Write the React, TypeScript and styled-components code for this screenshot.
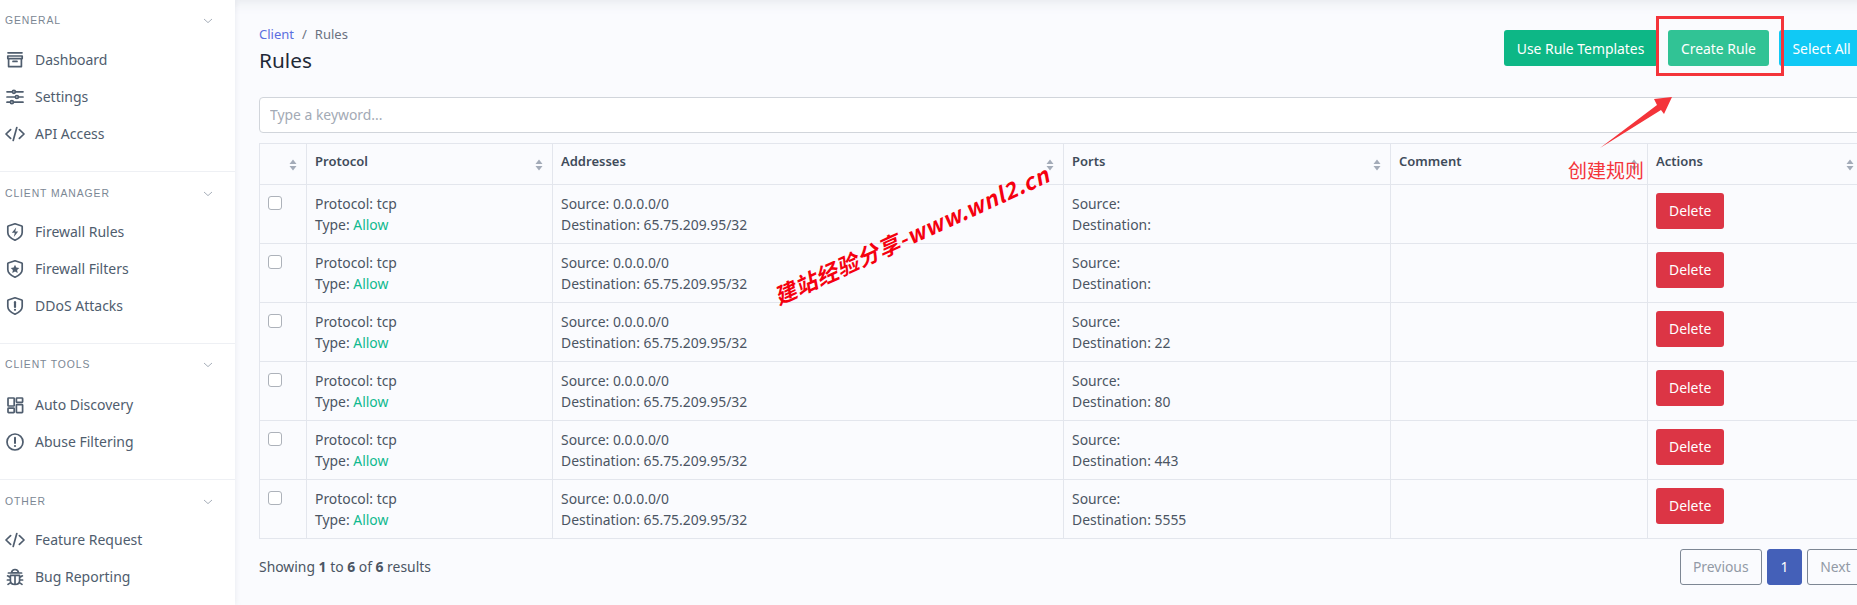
import React from "react";
import styled, { createGlobalStyle } from "styled-components";

const Global = createGlobalStyle`
  html, body { margin: 0; padding: 0; height: 605px; overflow: hidden; background: #fafbfe; }
  body { font-family: "Noto Sans", "Open Sans", sans-serif; font-size: 13.9px; color: #4b5563; }
  * { box-sizing: border-box; }
`;

const Shell = styled.div`
  position: relative;
  display: flex;
  width: 1857px;
  height: 605px;
  overflow: hidden;
  background: #fafbfe;
`;

const Sidebar = styled.aside`
  flex: 0 0 235px;
  background: #fff;
  box-shadow: 0 0 6px rgba(154, 161, 171, 0.2);
  position: relative;
  z-index: 1;
`;

const SectionHead = styled.div`
  height: 41px;
  padding: 0 22px 0 5px;
  display: flex;
  align-items: center;
  justify-content: space-between;
  font-family: "Liberation Sans", Arial, sans-serif;
  font-size: 10.4px;
  letter-spacing: 0.9px;
  color: #7b8794;
`;

const Section = styled.section<{ $h: number }>`
  height: ${(p) => p.$h}px;
  border-bottom: 1px solid #eef0f4;
  & + & ${SectionHead} { padding-top: 2px; }
`;

const ItemList = styled.ul<{ $top: number }>`
  list-style: none;
  margin: 0;
  padding: ${(p) => p.$top}px 0 0;
`;

const Item = styled.li`
  height: 37px;
  display: flex;
  align-items: center;
  gap: 10px;
  padding-left: 5px;
  font-size: 14px;
  color: #4f5d6e;
`;

const IconBox = styled.span`
  width: 20px;
  height: 20px;
  display: flex;
  color: #4f5d6e;
`;

const Main = styled.main`
  flex: 0 0 1628px;
  padding: 0 0 0 24px;
  position: relative;
  &::before {
    content: "";
    position: absolute;
    left: -10px;
    right: -40px;
    top: -10px;
    height: 10px;
    box-shadow: 0 0 14px rgba(154, 161, 171, 0.3);
  }
`;

const PageHead = styled.header`
  height: 97px;
  display: flex;
  justify-content: space-between;
  padding-top: 25px;
`;

const Crumbs = styled.nav`
  height: 18px;
  display: flex;
  align-items: center;
  gap: 8px;
  font-size: 13px;
  color: #6b7280;
`;

const CrumbLink = styled.span`
  color: #5a6ee0;
`;

const Title = styled.h1`
  margin: 2px 0 0;
  font-size: 20.8px;
  font-weight: 400;
  line-height: 30px;
  color: #1f2937;
`;

const Actions = styled.div`
  display: flex;
  gap: 10px;
  padding-top: 5px;
  align-items: flex-start;
`;

const Button = styled.button<{ $bg: string }>`
  height: 36px;
  padding: 0 13.3px;
  border: 0;
  border-radius: 3px;
  background: ${(p) => p.$bg};
  color: #fff;
  font: inherit;
  white-space: nowrap;
`;

const Search = styled.input`
  display: block;
  width: 100%;
  height: 36px;
  padding: 0 10px 2px;
  border: 1px solid #d1d5db;
  border-radius: 4px;
  background: #fff;
  font: inherit;
  outline: none;
  &::placeholder { color: #a3aab5; opacity: 1; }
`;

const Table = styled.table`
  margin-top: 10px;
  width: 100%;
  table-layout: fixed;
  border-collapse: collapse;
`;

const Th = styled.th`
  position: relative;
  height: 41px;
  padding: 7px 8px;
  border: 1px solid #e3e6ed;
  text-align: left;
  vertical-align: top;
  font-size: 13px;
  font-weight: 600;
  line-height: 21px;
  color: #404b5a;
`;

const Sort = styled.svg`
  position: absolute;
  right: 9px;
  top: 15px;
  width: 8px;
  height: 12px;
`;

const Td = styled.td`
  height: 59px;
  padding: 8px;
  border: 1px solid #e3e6ed;
  vertical-align: top;
  line-height: 21px;
  color: #4b5563;
`;

const Check = styled.span`
  display: block;
  width: 14px;
  height: 14px;
  margin: 3px 0 0;
  border: 1px solid #adb2ba;
  border-radius: 3px;
  background: #fff;
`;

const Allow = styled.span`
  color: #10b98f;
`;

const Delete = styled(Button)`
  display: block;
  padding: 0 13px 1px;
`;

const Footer = styled.footer`
  margin-top: 10px;
  display: flex;
  justify-content: space-between;
  align-items: center;
`;

const Summary = styled.span`
  padding-bottom: 2px;
`;

const Pager = styled.div`
  display: flex;
  gap: 5px;
`;

const PageBtn = styled.span<{ $active?: boolean }>`
  height: 36px;
  padding: 0 12.4px 2px;
  display: flex;
  align-items: center;
  border-radius: 3px;
  border: 1px solid ${(p) => (p.$active ? "#4460b8" : "#7d8794")};
  background: ${(p) => (p.$active ? "#4460b8" : "transparent")};
  color: ${(p) => (p.$active ? "#fff" : "#929aa6")};
`;

const RedBox = styled.div`
  position: absolute;
  left: 1656px;
  top: 16px;
  width: 128px;
  height: 60px;
  border: 3px solid #f4343a;
  z-index: 3;
`;

const Arrow = styled.svg`
  position: absolute;
  left: 1590px;
  top: 90px;
  width: 90px;
  height: 65px;
  z-index: 3;
`;

const Note = styled.div`
  position: absolute;
  left: 1568px;
  top: 157px;
  font-family: "Noto Sans CJK SC", sans-serif;
  font-size: 19px;
  line-height: 26px;
  color: #f4343a;
  z-index: 3;
`;

const Watermark = styled.div`
  position: absolute;
  left: 761px;
  top: 219px;
  transform: rotate(-24.5deg);
  transform-origin: 50% 50%;
  font-family: "Noto Sans CJK SC", sans-serif;
  font-size: 22px;
  font-weight: 700;
  font-style: italic;
  line-height: 30px;
  letter-spacing: 0.7px;
  white-space: nowrap;
  color: #f5000f;
  z-index: 3;
`;

const S = { fill: "none", stroke: "currentColor", strokeWidth: 1.7, strokeLinecap: "round", strokeLinejoin: "round" } as const;
const shield = "M10 1.8 16.8 4c.3 0 .4.2.4.5v6c0 3.400-2.800 5.800-7.200 7.700-4.400-1.900-7.200-4.300-7.200-7.700v-6c0-.3.1-.5.4-.5z";

const icons: Record<string, React.ReactNode> = {
  dashboard: <><path d="M3 2.800h14M2.800 6h14.400v2.600H2.800zM3.600 8.600v8h12.800v-8M8 11.400h4" {...S} /></>,
  settings: <><path d="M2 4.800h5.400M10.400 4.800H18M2 10h8.400M13.400 10H18M2 15.200h3.400M8.400 15.200H18" {...S} /><circle cx="8.900" cy="4.800" r="1.500" {...S} /><circle cx="11.900" cy="10" r="1.500" {...S} /><circle cx="6.900" cy="15.200" r="1.500" {...S} /></>,
  code: <><path d="M5.600 5.600 1 10l4.600 4.400M14.400 5.600 19 10l-4.600 4.400M11.800 3.600 8.200 16.400" {...S} /></>,
  bolt: <><path d={shield} {...S} /><path d="M11.200 5.600 6.800 10.800h3l-1 4.200 4.400-5.400h-3z" fill="currentColor" /></>,
  star: <><path d={shield} {...S} /><path d="m10 5.800 1.300 2.700 3 .4-2.200 2 .6 3-2.700-1.500-2.700 1.500.6-3-2.200-2 3-.4z" fill="currentColor" /></>,
  alert: <><path d={shield} {...S} /><path d="M10 6.200v4.800" {...S} strokeWidth={2.200} /><circle cx="10" cy="13.800" r="1.100" fill="currentColor" /></>,
  grid: <><rect x="3" y="3" width="6.200" height="8" rx=".6" {...S} /><rect x="11.400" y="3" width="6.200" height="4.400" rx=".6" {...S} /><rect x="3" y="13.200" width="6.200" height="4.400" rx=".6" {...S} /><rect x="11.400" y="9.600" width="6.200" height="8" rx=".6" {...S} /></>,
  circle: <><circle cx="10" cy="10" r="8" {...S} /><path d="M10 5.800v5.200" {...S} strokeWidth={2} /><circle cx="10" cy="14" r="1.100" fill="currentColor" /></>,
  bug: <><path d="M6.400 5.800c.4-2.200 1.800-3.300 3.600-3.300s3.200 1.100 3.600 3.300zM3.400 6h13.200M5.400 8.400h9.200v5c0 2.400-2 4-4.600 4s-4.600-1.600-4.600-4zM10 8.600v8.600M2.600 8.800l2.800 1.600M17.400 8.800l-2.800 1.600M2.400 13h3M17.600 13h-3M3 17.400l3-2M17 17.400l-3-2" {...S} /></>,
};

const SideIcon = ({ name }: { name: string }) => (
  <IconBox>
    <svg viewBox="0 0 20 20" width="20" height="20">{icons[name]}</svg>
  </IconBox>
);

const Chevron = () => (
  <svg width="10" height="6" viewBox="0 0 10 6"><path d="M1 1l4 3.600L9 1" fill="none" stroke="#a7afba" strokeWidth="1" /></svg>
);

const SortIcon = () => (
  <Sort viewBox="0 0 8 12"><path d="M4 .5 7.500 5h-7zM4 11.500.5 7h7z" fill="#a3abb8" /></Sort>
);

const nav = [
  { title: "GENERAL", h: 172, top: 0, items: [["dashboard", "Dashboard"], ["settings", "Settings"], ["code", "API Access"]] },
  { title: "CLIENT MANAGER", h: 172, top: 0, items: [["bolt", "Firewall Rules"], ["star", "Firewall Filters"], ["alert", "DDoS Attacks"]] },
  { title: "CLIENT TOOLS", h: 136, top: 1, items: [["grid", "Auto Discovery"], ["circle", "Abuse Filtering"]] },
  { title: "OTHER", h: 136, top: 0, items: [["code", "Feature Request"], ["bug", "Bug Reporting"]] },
];

const rows = ["", "", "22", "80", "443", "5555"];
const cols = [47, 246, 511, 327, 257, 216];
const heads = ["", "Protocol", "Addresses", "Ports", "Comment", "Actions"];

export default function App() {
  return (
    <Shell>
      <Global />
      <Sidebar>
        {nav.map((s) => (
          <Section key={s.title} $h={s.h}>
            <SectionHead>{s.title}<Chevron /></SectionHead>
            <ItemList $top={s.top}>
              {s.items.map(([icon, label]) => (
                <Item key={label}><SideIcon name={icon} />{label}</Item>
              ))}
            </ItemList>
          </Section>
        ))}
      </Sidebar>
      <Main>
        <PageHead>
          <div>
            <Crumbs><CrumbLink>Client</CrumbLink>/<span>Rules</span></Crumbs>
            <Title>Rules</Title>
          </div>
          <Actions>
            <Button $bg="#0db786">Use Rule Templates</Button>
            <Button $bg="#31c395">Create Rule</Button>
            <Button $bg="#10c9f5">Select All</Button>
          </Actions>
        </PageHead>
        <Search placeholder="Type a keyword..." />
        <Table>
          <colgroup>{cols.map((w, i) => <col key={i} style={{ width: w }} />)}</colgroup>
          <thead>
            <tr>{heads.map((h, i) => <Th key={i}>{h}<SortIcon /></Th>)}</tr>
          </thead>
          <tbody>
            {rows.map((port, i) => (
              <tr key={i}>
                <Td><Check /></Td>
                <Td>Protocol: tcp<br />Type: <Allow>Allow</Allow></Td>
                <Td>Source: 0.0.0.0/0<br />Destination: 65.75.209.95/32</Td>
                <Td>Source:<br />Destination: {port}</Td>
                <Td />
                <Td><Delete $bg="#dc3545">Delete</Delete></Td>
              </tr>
            ))}
          </tbody>
        </Table>
        <Footer>
          <Summary>Showing <b>1</b> to <b>6</b> of <b>6</b> results</Summary>
          <Pager>
            <PageBtn>Previous</PageBtn>
            <PageBtn $active>1</PageBtn>
            <PageBtn>Next</PageBtn>
          </Pager>
        </Footer>
      </Main>
      <RedBox />
      <Arrow viewBox="0 0 90 65"><path d="M10 58 67 15 64 9 82 7 74 24 71 20z" fill="#f4343a" /></Arrow>
      <Note>创建规则</Note>
      <Watermark>建站经验分享-www.wnl2.cn</Watermark>
    </Shell>
  );
}
